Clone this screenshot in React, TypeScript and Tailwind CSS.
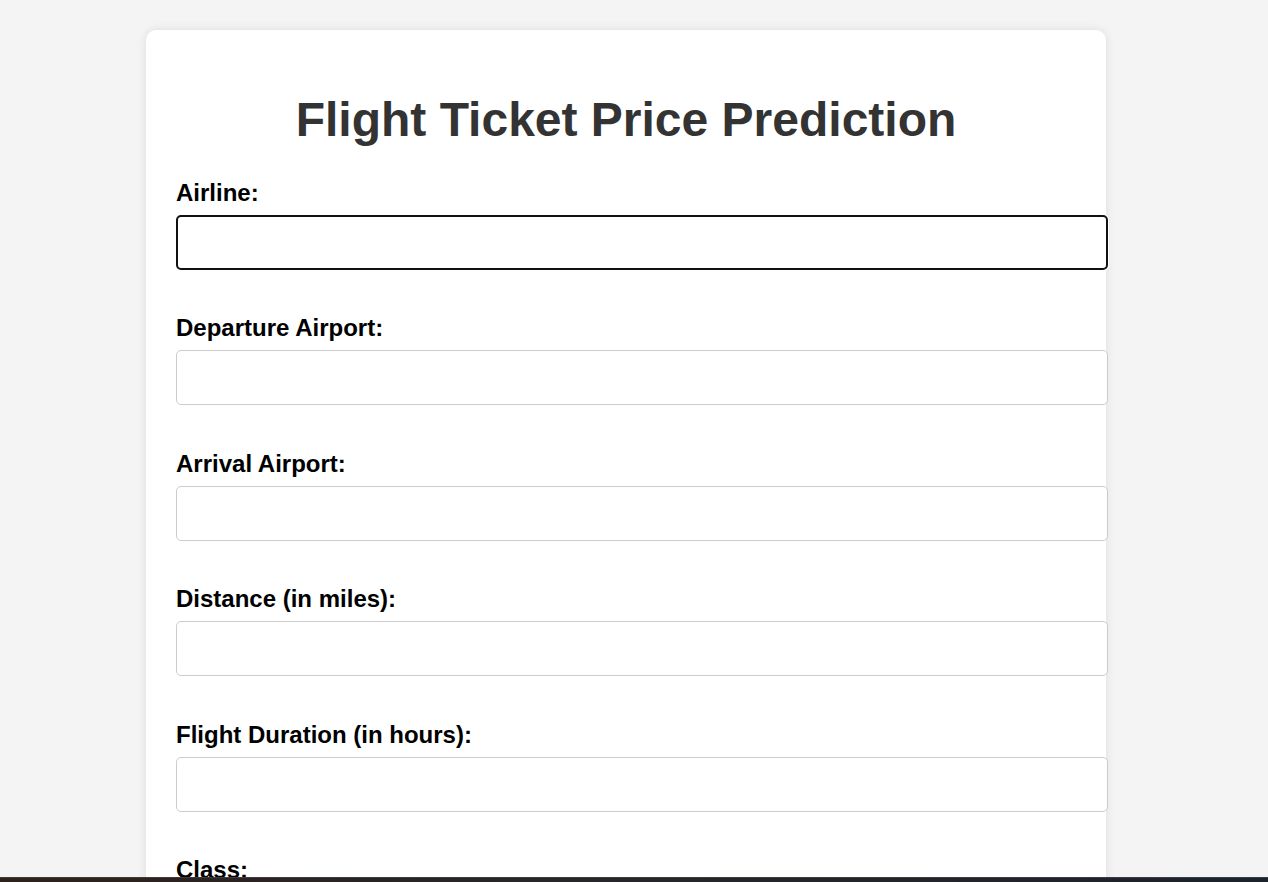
const fields = [
  "Airline:",
  "Departure Airport:",
  "Arrival Airport:",
  "Distance (in miles):",
  "Flight Duration (in hours):",
];

export default function App() {
  return (
    <div className="h-screen overflow-hidden bg-[#f4f4f4] pr-4 font-['Liberation_Sans',Arial,sans-serif]">
      <div className="mx-auto mt-[30px] w-[960px] rounded-[10px] bg-white px-[30px] pt-[30px] pb-[30px] shadow-[0_0_10px_rgba(0,0,0,0.1)]">
        <h1 className="mt-[32px] mb-[32px] text-center text-[48px] leading-[55px] font-bold text-[#333]">
          Flight Ticket Price Prediction
        </h1>
        <form>
          {fields.map((label, i) => (
            <div key={label} className="mb-[44.4px]">
              <label className="mb-[8px] block text-[24px] leading-[28px] font-bold text-black">
                {label}
              </label>
              <input
                type="text"
                className={
                  i === 0
                    ? "block h-[55px] w-[932px] rounded-[5px] border-[2.5px] border-[#111] bg-white px-[15px] shadow-[0_0_0_1px_#fff] outline-none"
                    : "block h-[55px] w-[932px] rounded-[5px] border border-[#ccc] bg-white px-[15px] outline-none"
                }
              />
            </div>
          ))}
          <div>
            <label className="mb-[8px] block text-[24px] leading-[28px] font-bold text-black">Class:</label>
            <select className="block h-[55px] w-[932px] rounded-[5px] border border-[#ccc] bg-white px-[15px]">
              <option>Economy</option>
              <option>Business</option>
            </select>
          </div>
        </form>
      </div>
      <div className="fixed right-0 bottom-0 left-0 h-[5px] border-t border-[#3c3c3c] bg-gradient-to-r from-[#2e221c] via-[#26262a] to-[#1c232a]" />
    </div>
  );
}
